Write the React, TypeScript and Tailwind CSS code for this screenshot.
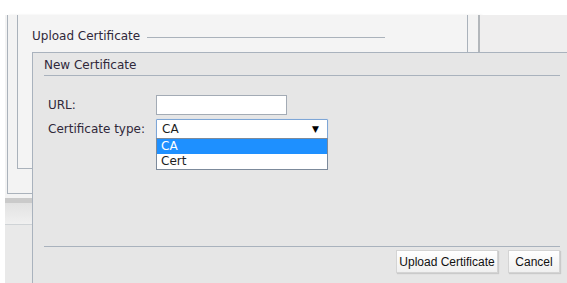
import React from "react";

const sans = "font-['DejaVu_Sans',Verdana,sans-serif]";
const arial = "font-['Liberation_Sans',Arial,sans-serif]";

function Backdrop() {
  return (
    <div className="flex h-full flex-col">
      <div className="h-[15px] bg-white" />
      <div className="ml-[5px] flex flex-1 flex-col bg-[#f3f3f3]">
        <div className="flex h-[179px]">
          <div className="ml-[2px] w-[473px] border-b border-l border-r-2 border-[#aab2bb] border-r-[#b3b7bb] shadow-[2px_0_2px_rgba(0,0,0,0.08)]">
            <div className="ml-[9px] h-[154px] w-[451px] border-b border-l border-r border-[#aab2bb] bg-[#f4f4f4] pl-[14px] pt-[14px]">
              <div className={`${sans} flex items-center gap-[7px] text-[12px] leading-[14px] text-[#30283a]`}>
                <span>Upload Certificate</span>
                <div className="mt-[2px] h-px w-[238px] bg-[#aab2bb]" />
              </div>
            </div>
          </div>
          <div className="flex-1 bg-[#efeeee]" />
        </div>
        <div className="h-[4px] bg-[#f3f3f3]" />
        <div className="h-[5px] bg-[#cacaca]" />
        <div className="h-[21px] bg-gradient-to-b from-[#e2e2e2] to-[#f0f0f0]" />
        <div className="h-px bg-[#cfd3d6]" />
        <div className="flex-1 bg-[#e9e9e9]" />
      </div>
    </div>
  );
}

function Dialog() {
  return (
    <div className={`${sans} absolute left-[32px] top-[52px] flex h-[231px] w-[535px] flex-col border-l border-t border-[#a9b2bd] bg-[#e6e6e6] text-[12px] leading-[14px] text-[#30283a]`}>
      <div className="ml-[11px] mr-[7px] border-b border-[#a9b2bd] pb-[3px] pt-[5px]">
        <span>New Certificate</span>
      </div>
      <div className="ml-[15px] mt-[19px] flex flex-col gap-[4px]">
        <div className="flex items-center">
          <label className="w-[108px]">URL:</label>
          <div className="h-[20px] w-[131px] border border-[#a3abb5] bg-white" />
        </div>
        <div className="flex items-center">
          <label className="w-[108px]">Certificate type:</label>
          <div className="relative">
            <div className="flex h-[20px] w-[172px] items-center justify-between rounded-[1px] border border-[#7ea6d6] bg-white pl-[5px] pr-[8px] shadow-[0_0_1px_#a9c7ef]">
              <span className="text-[#1d1d1d]">CA</span>
              <span className="text-[9px] leading-none text-black">▼</span>
            </div>
            <div className="absolute left-0 top-[19px] w-[172px] border border-[#7c8a9b] bg-white">
              <div className="h-[15px] bg-[#1e90ff] pl-[4px] leading-[15px] text-white">CA</div>
              <div className="h-[15px] pl-[4px] leading-[15px] text-[#1d1d1d]">Cert</div>
            </div>
          </div>
        </div>
      </div>
      <div className="flex-1" />
      <div className="ml-[11px] mr-[7px] flex justify-end gap-[10px] border-t border-[#a9b2bd] pb-[10px] pt-[3px]">
        <button className={`${arial} h-[23px] w-[102px] border border-[#d4d4d4] bg-gradient-to-b from-white to-[#f0f0f0] text-[12px] text-[#111] shadow-[1px_1px_1px_rgba(0,0,0,0.12)]`}>
          Upload Certificate
        </button>
        <button className={`${arial} h-[23px] w-[52px] border border-[#d4d4d4] bg-gradient-to-b from-white to-[#f0f0f0] text-[12px] text-[#111] shadow-[1px_1px_1px_rgba(0,0,0,0.12)]`}>
          Cancel
        </button>
      </div>
    </div>
  );
}

export default function App() {
  return (
    <div className="relative h-[283px] w-[567px] overflow-hidden bg-white">
      <Backdrop />
      <Dialog />
    </div>
  );
}
